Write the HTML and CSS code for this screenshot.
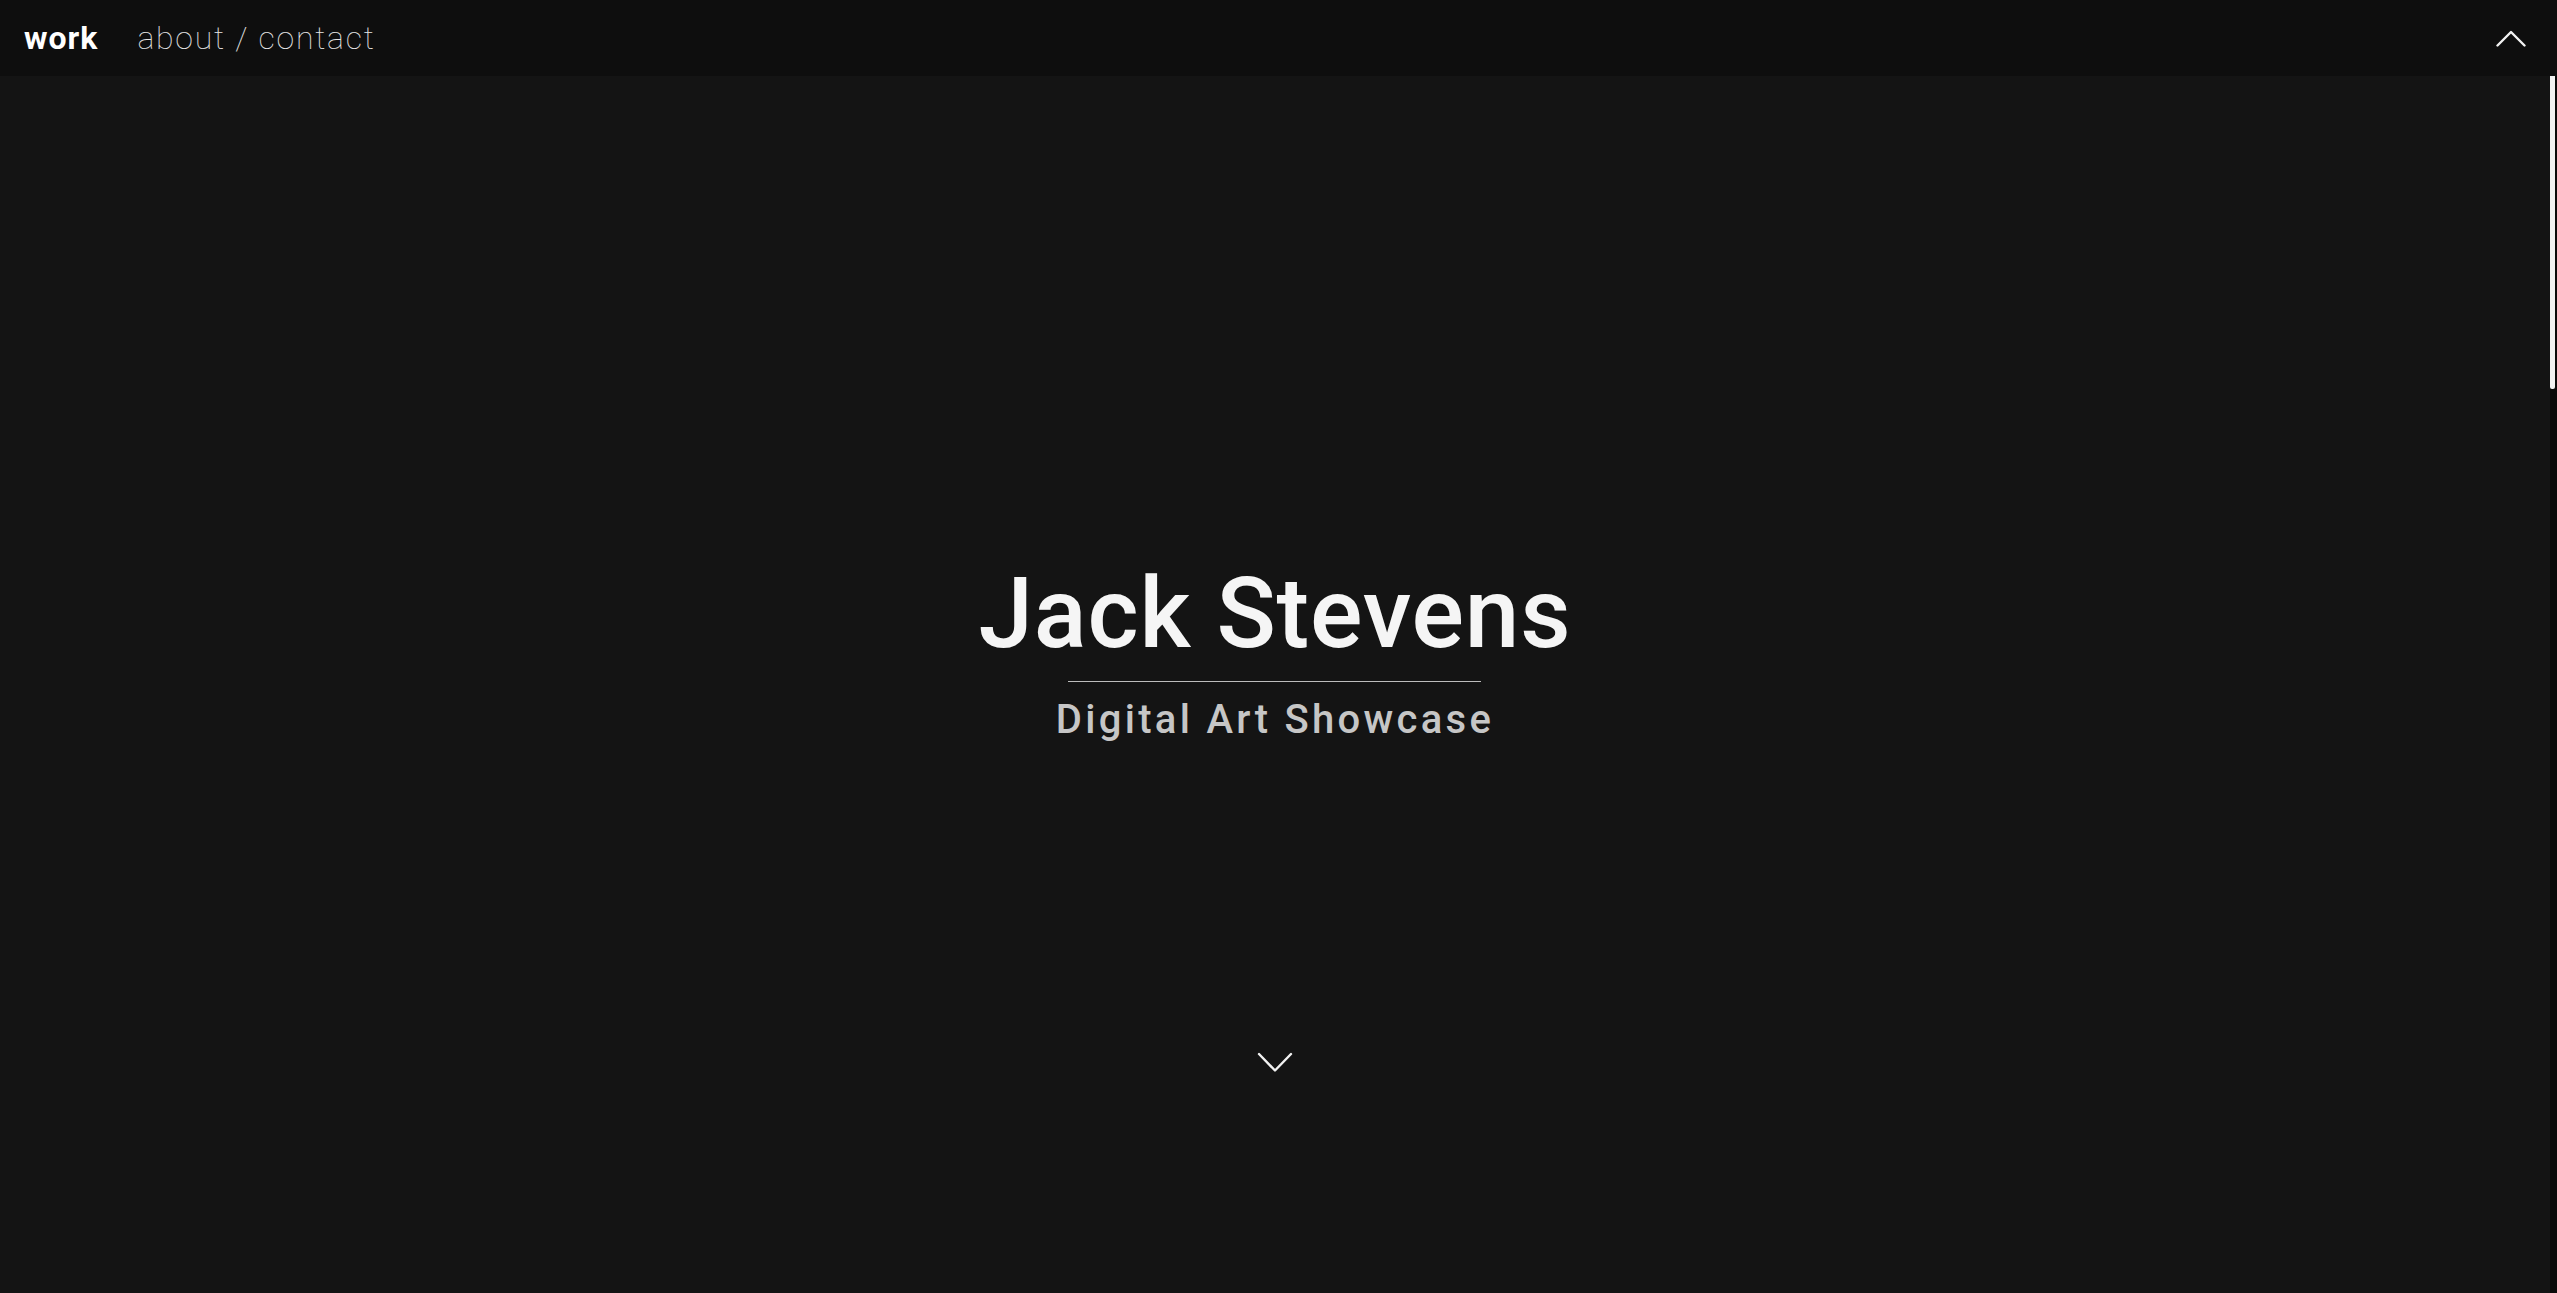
FILE: index.html
```html
<!DOCTYPE html>
<html lang="en">
<head>
<meta charset="utf-8">
<title>Jack Stevens — Digital Art Showcase</title>
<link rel="stylesheet" href="styles.css">
</head>
<body>
<header class="topbar">
  <nav class="nav">
    <a class="nav-link nav-link--active" href="#work">work</a>
    <span class="nav-group">
      <a class="nav-link" href="#about">about</a>
      <span class="nav-sep">/</span>
      <a class="nav-link" href="#contact">contact</a>
    </span>
  </nav>
  <button class="icon-btn" aria-label="Back to top">
    <svg width="30" height="17" viewBox="0 0 30 17"><polyline points="1.5,15.5 15,2 28.5,15.5" fill="none" stroke="#f2f2f2" stroke-width="2.4" stroke-linecap="round" stroke-linejoin="round"/></svg>
  </button>
</header>
<div class="stage">
  <main class="scroller">
    <section class="hero">
      <div class="hero-text">
        <h1 class="hero-title">Jack Stevens</h1>
        <div class="hero-rule"></div>
        <p class="hero-sub">Digital Art Showcase</p>
      </div>
      <a class="hero-down" href="#work" aria-label="Scroll down">
        <svg width="36" height="21" viewBox="0 0 36 21"><polyline points="2,2 18,18.5 34,2" fill="none" stroke="#f2f2f2" stroke-width="2.4" stroke-linecap="round" stroke-linejoin="round"/></svg>
      </a>
    </section>
    <section class="gallery" id="work">
      <div class="tile"></div>
      <div class="tile"></div>
      <div class="tile"></div>
      <div class="tile"></div>
      <div class="tile"></div>
      <div class="tile"></div>
      <div class="tile"></div>
      <div class="tile"></div>
    </section>
  </main>
  <div class="rail" aria-hidden="true">
    <div class="rail-thumb"></div>
  </div>
</div>
</body>
</html>
```
FILE: styles.css
```css
html, body {
  margin: 0;
  padding: 0;
  height: 100%;
}
body {
  display: flex;
  flex-direction: column;
  background: #141414;
  color: #f5f5f5;
  font-family: Roboto, "Liberation Sans", Arial, sans-serif;
  overflow: hidden;
}
.topbar {
  flex: 0 0 76px;
  height: 76px;
  box-sizing: border-box;
  display: flex;
  align-items: center;
  justify-content: space-between;
  padding: 0 31px 0 24px;
  background: #0e0e0e;
}
.nav {
  display: flex;
  align-items: center;
  gap: 39px;
  font-size: 32px;
}
.nav-link {
  color: #e6e6e6;
  text-decoration: none;
  font-weight: 100;
}
.nav-link--active {
  color: #ffffff;
  font-weight: 700;
  letter-spacing: 1px;
}
.nav-group {
  color: #e6e6e6;
  font-weight: 100;
  letter-spacing: 1.75px;
}
.icon-btn {
  background: none;
  border: 0;
  padding: 0;
  display: flex;
  cursor: pointer;
}
.stage {
  flex: 1 1 auto;
  min-height: 0;
  display: flex;
}
.scroller {
  flex: 1 1 auto;
  min-width: 0;
  overflow-y: auto;
  background: #141414;
  scrollbar-width: none;
}
.scroller::-webkit-scrollbar {
  display: none;
}
.rail {
  flex: 0 0 7px;
  background: #0a0a0a;
}
.rail-thumb {
  width: 5px;
  height: 313px;
  background: #f2f2f2;
  border-radius: 0 0 2px 2px;
}
.hero {
  height: 100%;
  box-sizing: border-box;
  display: flex;
  flex-direction: column;
  align-items: center;
  padding: 480px 0 220px;
}
.hero-text {
  display: flex;
  flex-direction: column;
  align-items: center;
}
.hero-title {
  margin: 0;
  font-size: 98px;
  font-weight: 500;
  line-height: 115px;
  color: #f5f5f5;
  letter-spacing: 0.8px;
}
.hero-rule {
  width: 413px;
  height: 1px;
  margin-top: 10px;
  background: #bdbdbd;
}
.hero-sub {
  margin: 14px 0 0;
  font-size: 40px;
  line-height: 47px;
  font-weight: 500;
  color: #c6c6c6;
  letter-spacing: 3.3px;
}
.hero-down {
  margin-top: auto;
  display: flex;
}
.gallery {
  display: grid;
  grid-template-columns: repeat(2, 1fr);
  gap: 24px;
  padding: 60px 24px;
}
.tile {
  height: 780px;
  background: #1b1b1b;
}
```
